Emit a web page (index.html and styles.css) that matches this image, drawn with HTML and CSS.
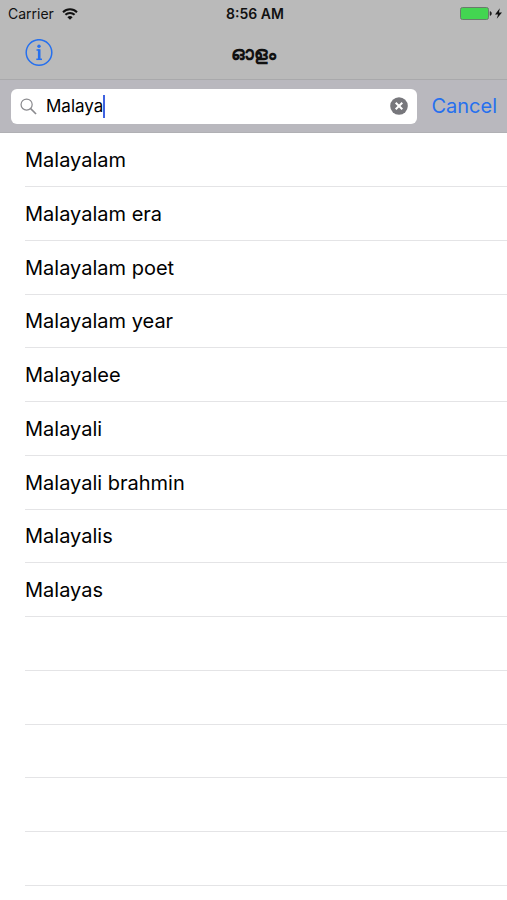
FILE: index.html
```
<!DOCTYPE html>
<html lang="en">
<head>
  <meta charset="UTF-8">
  <meta name="viewport" content="width=device-width, initial-scale=1.0">
  <title>ഓളം</title>
  <link rel="stylesheet" href="styles.css">
</head>
<body>
  <header class="top">
    <div class="status-bar">
      <div class="carrier">
        <span>Carrier</span>
        <svg class="wifi" viewBox="0 0 16 12">
          <path d="M1 4.2a10 10 0 0 1 14 0M3.4 6.8a6.500 6.500 0 0 1 9.200 0" fill="none" stroke="#111" stroke-width="2"/>
          <path d="M8 11.800L5.400 9.200a3.700 3.700 0 0 1 5.200 0z" fill="#111"/>
        </svg>
      </div>
      <span class="time">8:56 AM</span>
      <div class="battery">
        <svg class="cell" viewBox="0 0 32 14">
          <rect x="0.500" y="0.500" width="28" height="12" rx="2" fill="#43d551" stroke="#6a7a6c"/>
          <path d="M30 4.500v4c1-.3 1.500-1 1.500-2s-.5-1.700-1.500-2z" fill="#222" stroke="#222" stroke-width=".5"/>
        </svg>
        <svg class="bolt" viewBox="0 0 8 12">
          <path d="M5.500 0L0 7h3.500L2 12l6-7.200H4.500z" fill="#111"/>
        </svg>
      </div>
    </div>
    <nav class="nav-bar">
      <button type="button" class="info-btn" aria-label="Info">
        <svg viewBox="0 0 28 28">
          <circle cx="14" cy="13.500" r="12.800" fill="none" stroke="#2670ee" stroke-width="1.500"/>
          <circle cx="14" cy="7.300" r="1.700" fill="#2670ee"/>
          <path d="M11.500 11h3" stroke="#2670ee" stroke-width="1.500"/>
          <path d="M14.200 10.300v10" stroke="#2670ee" stroke-width="2.600"/>
          <path d="M11.300 20.300h5.700" stroke="#2670ee" stroke-width="1.500"/>
        </svg>
      </button>
      <h1>ഓളം</h1>
    </nav>
  </header>
  <form class="search-bar">
    <div class="search-box">
      <svg class="glass" viewBox="0 0 18 18">
        <circle cx="7" cy="7" r="5.900" fill="none" stroke="#8a8a8e" stroke-width="1.300"/>
        <path d="M11.300 11.300l5.700 5.700" stroke="#8a8a8e" stroke-width="1.700"/>
      </svg>
      <label class="field">
        <input type="text" id="searchInput" value="Malaya" aria-label="Search" autocomplete="off">
        <span class="caret"></span>
      </label>
      <button type="reset" class="clear-btn" aria-label="Clear">
        <svg viewBox="0 0 18 18">
          <circle cx="9" cy="9" r="8.800" fill="#77777c"/>
          <path d="M5.700 5.700l6.600 6.600M12.300 5.700l-6.600 6.600" stroke="#fff" stroke-width="2"/>
        </svg>
      </button>
    </div>
    <button type="button" class="cancel-btn">Cancel</button>
  </form>
  <ul class="results">
    <li>Malayalam</li>
    <li>Malayalam era</li>
    <li>Malayalam poet</li>
    <li>Malayalam year</li>
    <li>Malayalee</li>
    <li>Malayali</li>
    <li>Malayali brahmin</li>
    <li>Malayalis</li>
    <li>Malayas</li>
    <li></li>
    <li></li>
    <li></li>
    <li></li>
    <li></li>
  </ul>
</body>
</html>
```
FILE: styles.css
```
* {
  box-sizing: border-box;
}
body {
  margin: 0;
  background: #fff;
  color: #000;
  font-family: Inter, "Liberation Sans", sans-serif;
}
button {
  padding: 0;
  border: none;
  background: transparent;
  font: inherit;
  cursor: pointer;
}
svg {
  display: block;
}
.top {
  background: #bababa;
  border-bottom: 1px solid #a9a9ab;
}
.status-bar {
  display: grid;
  grid-template-columns: 1fr auto 1fr;
  align-items: center;
  height: 27px;
  padding: 0 5px 0 8px;
  color: #111;
  font-size: 14px;
}
.carrier,
.battery {
  display: flex;
  align-items: center;
  gap: 8px;
}
.battery {
  justify-content: flex-end;
  gap: 3px;
}
.wifi {
  width: 16px;
  height: 12px;
}
.cell {
  width: 32px;
  height: 14px;
}
.bolt {
  width: 7px;
  height: 11px;
}
.time {
  font-size: 14px;
  font-weight: 600;
}
.nav-bar {
  display: grid;
  grid-template-columns: 1fr auto 1fr;
  align-items: center;
  height: 52px;
  padding: 0 25px;
}
.info-btn {
  width: 28px;
  height: 28px;
}
.nav-bar h1 {
  margin: 0;
  color: #111;
  font-size: 19px;
  font-weight: 600;
}
.search-bar {
  display: flex;
  align-items: center;
  gap: 14px;
  height: 53px;
  padding: 0 10px 0 11px;
  background: #b9b8be;
  border-bottom: 1px solid #b0b0b4;
}
.search-box {
  display: flex;
  flex: 1;
  align-items: center;
  gap: 9px;
  height: 35px;
  padding: 0 9px;
  border-radius: 6px;
  background: #fff;
}
.glass {
  width: 17px;
  height: 17px;
}
.field {
  display: flex;
  flex: 1;
  align-items: center;
}
.field input {
  field-sizing: content;
  padding: 0;
  border: none;
  outline: none;
  background: transparent;
  color: #000;
  font: inherit;
  font-size: 17px;
}
.caret {
  width: 2px;
  height: 23px;
  background: #4062e0;
}
.clear-btn,
.clear-btn svg {
  width: 18px;
  height: 18px;
}
.cancel-btn {
  color: #2670ee;
  font-size: 20px;
}
.results {
  margin: 0;
  padding: 0 0 0 25px;
  list-style: none;
}
.results li {
  display: flex;
  align-items: center;
  height: 54px;
  border-bottom: 1px solid #e4e4e6;
  font-size: 20px;
}
.results li:nth-child(4n) {
  height: 53px;
}
```
